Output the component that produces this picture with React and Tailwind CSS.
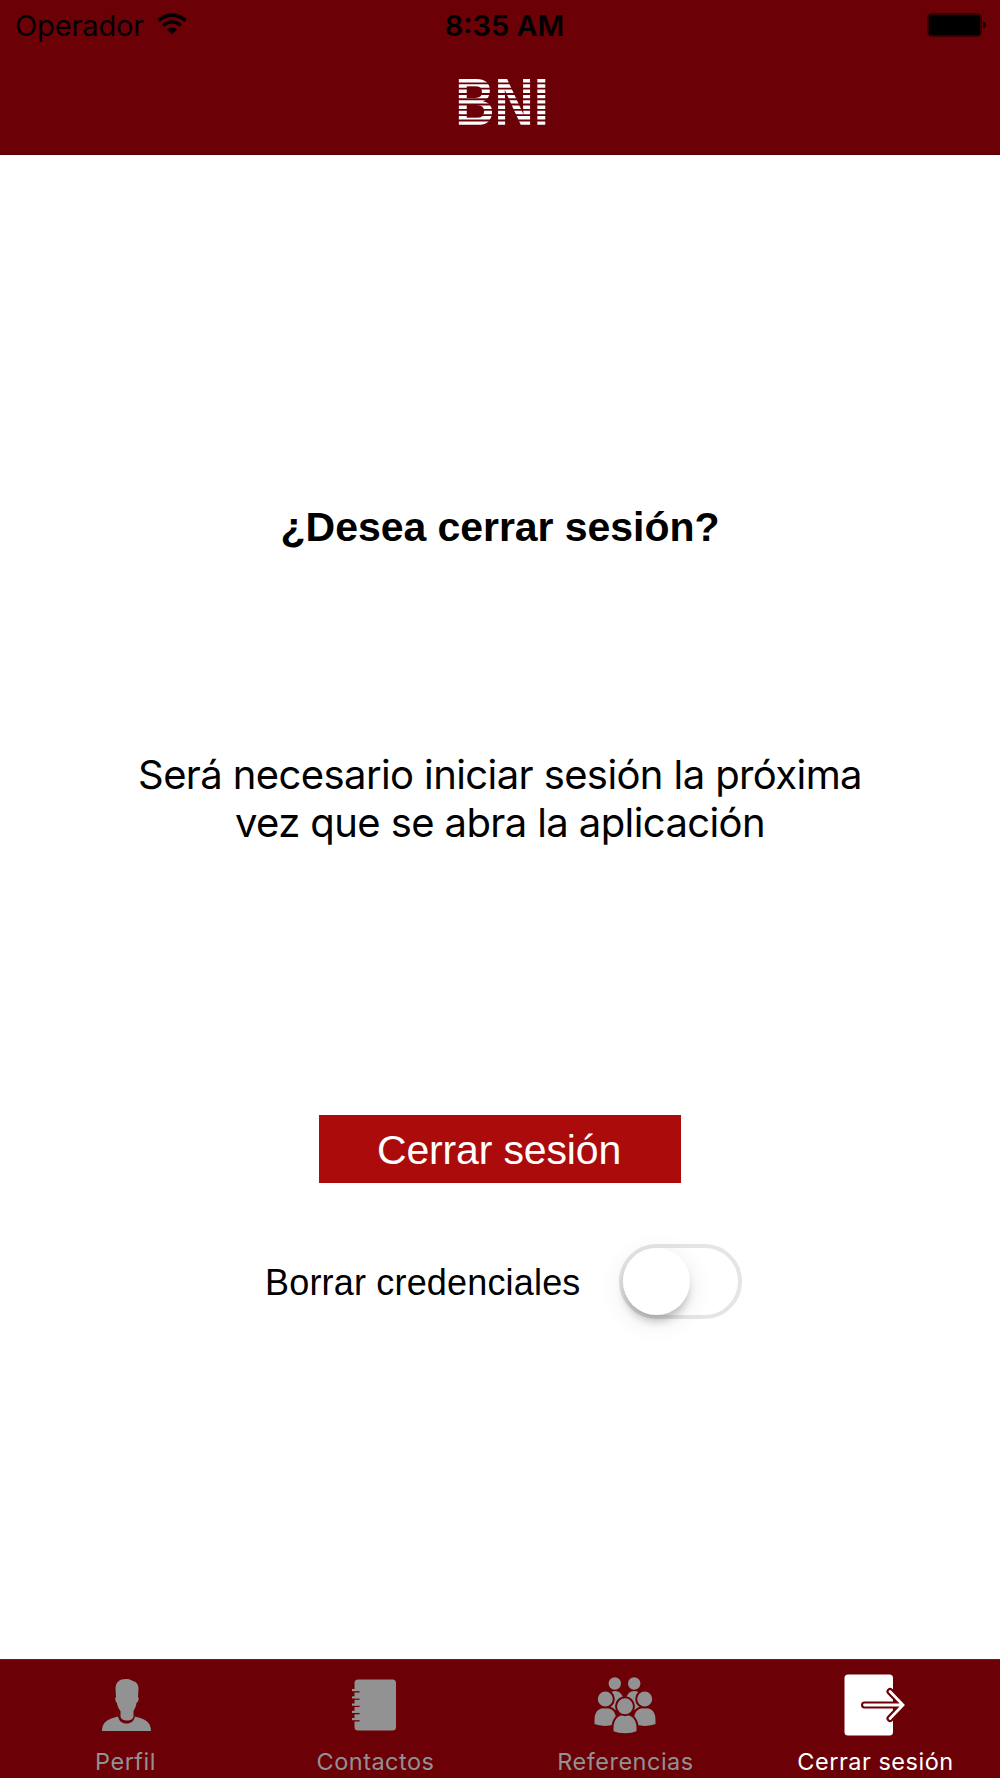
import React from "react";

const Wifi = () => (
  <svg className="w-[30px] h-[22px]" viewBox="0 0 30 22" fill="none">
    <path d="M1.5 7.6a19.6 19.6 0 0 1 27 0" stroke="#000" strokeWidth="3.6" />
    <path d="M6.2 12.4a12.8 12.8 0 0 1 17.6 0" stroke="#000" strokeWidth="3.4" />
    <path d="M10 16.4a7.2 7.2 0 0 1 10 0L15 21.6z" fill="#000" />
  </svg>
);

const Battery = () => (
  <svg className="w-[60px] h-6" viewBox="0 0 60 24">
    <rect x="0.5" y="0.5" width="54" height="23" rx="4" fill="none" stroke="#3a0004" />
    <rect x="1.5" y="1.5" width="52" height="21" rx="2" fill="#000" />
    <path d="M56 8.5a3.6 3.6 0 0 1 0 7z" fill="#000" />
  </svg>
);

const stripes = [0, 5.3, 10.6, 15.9, 21.2, 26.5, 31.8, 37.1, 42.4];

// the letters are cut into horizontal stripes
const Logo = () => (
  <svg className="w-[104px] h-[82px]" viewBox="-8 -18 104 82">
    <defs>
      <clipPath id="stripes">
        {stripes.map((y) => (
          <rect key={y} x="-8" y={y} width="104" height="3.4" />
        ))}
      </clipPath>
    </defs>
    <g clipPath="url(#stripes)">
      <text
        x="-3.7"
        y="45.8"
        textLength="93.5"
        lengthAdjust="spacingAndGlyphs"
        className="fill-white text-[66.5px] font-bold font-['Liberation_Sans',sans-serif]"
      >
        BNI
      </text>
    </g>
  </svg>
);

const PerfilIcon = () => (
  <svg className="ml-[3px] w-[49px] h-[52px]" viewBox="0 0 49 52" fill="#929292">
    <path d="M24 0c4 0 5 1 7 2 4 1 5.500 4 5.500 8l-.5 8c1.500 1 .5 5-1.500 6-.5 4-2 6-3 8v5c0 3-3 4.500-6.500 4.500s-6.500-1.500-6.500-4.500v-5c-1.500-2-3-4-3.500-8-1.500-1-2.500-5-1-6l-.5-8c0-7 4-10 10.500-10z" />
    <path d="M0 52c0-9 6-12 16-14.500 1 4.500 4 7 8.500 7s7.500-2.500 8.500-7c10 2.500 16 5.500 16 14.500z" />
  </svg>
);

const ContactosIcon = () => (
  <svg className="w-[46px] h-[52px] mr-[2px]" viewBox="-1 0 46 52">
    <rect x="2.500" y="0.500" width="41.500" height="51" rx="3.500" fill="#929292" />
    {[11, 18.3, 25.5, 32.8, 40].map((y) => (
      <g key={y}>
        <path d={`M0 ${y + 1}h7.500v1.500H0z`} fill="#6c0007" />
        <path d={`M0 ${y - 1}h7.500v2.200H0z`} fill="#929292" />
      </g>
    ))}
  </svg>
);

const ReferenciasIcon = () => (
  <svg className="w-[62px] h-[57px]" viewBox="0 0 62 57" fill="#929292">
    <circle cx="20.800" cy="6.500" r="6.200" />
    <circle cx="40.200" cy="6.500" r="6.200" />
    <path d="M12 27c0-8 4-13 9-13s8 4 9 10v9H12zM50 27c0-8-4-13-9.500-13s-8 4-9 10v9H50z" />
    <g stroke="#6c0007" strokeWidth="2">
      <path d="M-.5 43c0-8 4-13 11.800-13s11.700 5 11.700 13v5c-7 2.500-17 2.500-23.500 0zM62.500 43c0-8-4-13-11.800-13S39 35 39 43v5c7 2.500 17 2.500 23.500 0z" />
      <circle cx="11.300" cy="22" r="8.500" />
      <circle cx="50.700" cy="22" r="8.500" />
      <path d="M18.500 51c0-9 5-14 12.500-14s12.500 5 12.500 14v4c-7 3-18 3-25 0z" />
      <circle cx="31" cy="29.300" r="9" />
    </g>
  </svg>
);

const SalirIcon = () => (
  <svg className="w-[62px] h-[62px]" viewBox="0 0 62 62" fill="none" strokeLinecap="round">
    <rect x="0.500" y="0.500" width="48.500" height="61" rx="3.500" fill="#fff" />
    <path d="M20.500 31H58M46 17.500L59 31L46 44.500" stroke="#6c0007" strokeWidth="7" />
    <path d="M20.500 31H58M46 17.500L59 31L46 44.500" stroke="#fff" strokeWidth="2.800" />
  </svg>
);

const tabs = [
  { text: "Perfil", icon: <PerfilIcon />, color: "text-[#929292]" },
  { text: "Contactos", icon: <ContactosIcon />, color: "text-[#929292]" },
  { text: "Referencias", icon: <ReferenciasIcon />, color: "text-[#929292]" },
  { text: "Cerrar sesión", icon: <SalirIcon />, color: "text-white" },
];

const App = () => {
  return (
    <div className="w-[1000px] h-[1778px] bg-white flex flex-col text-black font-['Liberation_Sans',sans-serif] whitespace-nowrap">
      {/* HEADER */}
      <header className="h-[155px] bg-[#6c0007] border-b border-[#560006] flex flex-col">
        <div className="h-[51px] grid grid-cols-3 items-center pl-[15px] pr-[13px] font-[Inter,sans-serif] text-[29px]">
          <div className="flex items-center gap-[13px]">
            <span className="tracking-[-0.12px]">Operador</span>
            <div className="pb-[3px]">
              <Wifi />
            </div>
          </div>
          <span className="text-center pl-[7px] font-semibold">8:35 AM</span>
          <div className="flex justify-end pb-px">
            <Battery />
          </div>
        </div>
        <div className="flex justify-center pl-[6px] pt-[10px]">
          <Logo />
        </div>
      </header>

      <main className="flex-1 flex flex-col items-center">
        <h1 className="mt-[348px] text-[41px] leading-[48px] font-bold tracking-[-0.05px]">
          ¿Desea cerrar sesión?
        </h1>
        <p className="mt-[200px] text-center font-[Inter,sans-serif] text-[40px] leading-[48px] tracking-[-0.6px]">
          Será necesario iniciar sesión la próxima
          <br />
          vez que se abra la aplicación
        </p>
        <button className="mt-[268px] w-[362px] h-[68px] pt-[2px] pr-[2px] bg-[#ab0b0b] text-white text-[41px] leading-[48px] tracking-[-0.15px]">
          Cerrar sesión
        </button>
        <div className="mt-[61px] ml-[7px] w-[477px] flex items-center justify-between">
          <span className="pt-[2px] text-[36px] tracking-[0.18px]">Borrar credenciales</span>
          <div className="w-[123px] h-[75px] rounded-full border-4 border-[#e5e5e5]">
            <div className="size-[67px] rounded-full bg-white shadow-[0_8px_8px_-2px_rgba(0,0,0,0.22),0_6px_26px_rgba(0,0,0,0.1)]" />
          </div>
        </div>
      </main>

      {/* TAB BAR */}
      <nav className="h-[119px] bg-[#6c0007] border-t border-[#4a2a2a] grid grid-cols-4 font-[Inter,sans-serif] text-[23.5px] tracking-[0.5px]">
        {tabs.map((data) => (
          <div key={data.text} className="flex flex-col items-center">
            <div className="h-[90px] flex items-center">{data.icon}</div>
            <span className={`pl-px leading-6 ${data.color}`}>{data.text}</span>
          </div>
        ))}
      </nav>
    </div>
  );
};

export default App;
